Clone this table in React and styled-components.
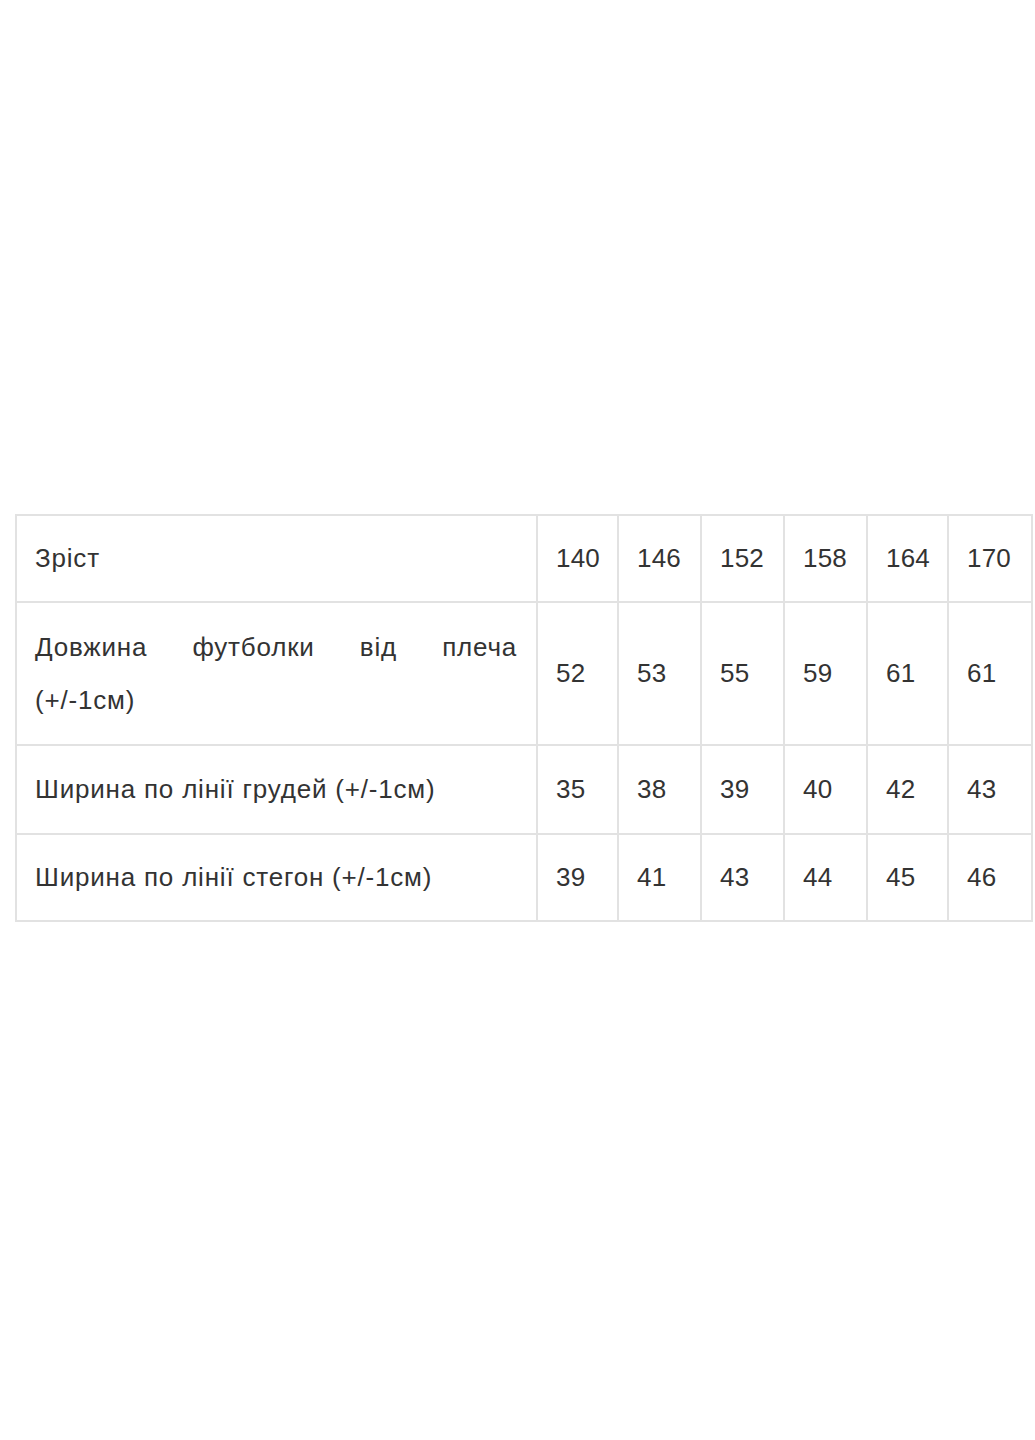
import React from "react";
import styled, { createGlobalStyle } from "styled-components";

const Global = createGlobalStyle`
  html, body { margin: 0; padding: 0; background: #fff; }
`;

const Page = styled.div`
  width: 1035px;
  height: 1440px;
  box-sizing: border-box;
  padding: 514px 0 0 15px;
  font-family: "Liberation Sans", Arial, sans-serif;
  color: #333;
`;

const Table = styled.table`
  border-collapse: collapse;
  table-layout: fixed;
  width: 1017px;
  font-size: 26px;
  line-height: 53px;
`;

const Col = styled.col`
  width: ${(p) => p.$w}px;
`;

const Row = styled.tr`
  height: ${(p) => p.$h}px;
`;

const Cell = styled.td`
  border: 2px solid #e2e2e2;
  padding: 16px ${(p) => (p.$label ? 19 : 0)}px 16px 18px;
  vertical-align: middle;
  text-align: left;
  letter-spacing: ${(p) => (p.$label ? "0.8px" : "0.2px")};
`;

const Line = styled.div`
  text-align: ${(p) => (p.$justify ? "justify" : "left")};
  text-align-last: ${(p) => (p.$justify ? "justify" : "left")};
`;

const cols = [521, 81, 83, 83, 83, 81, 84];

const rows = [
  { lines: ["Зріст"], values: ["140", "146", "152", "158", "164", "170"], h: 87 },
  { lines: ["Довжина футболки від плеча", "(+/-1см)"], values: ["52", "53", "55", "59", "61", "61"], h: 143 },
  { lines: ["Ширина по лінії грудей (+/-1см)"], values: ["35", "38", "39", "40", "42", "43"], h: 89 },
  { lines: ["Ширина по лінії стегон (+/-1см)"], values: ["39", "41", "43", "44", "45", "46"], h: 87 },
];

export default function App() {
  return (
    <Page>
      <Global />
      <Table>
        <colgroup>
          {cols.map((w, i) => (
            <Col key={i} $w={w} />
          ))}
        </colgroup>
        <tbody>
          {rows.map((r) => (
            <Row key={r.lines[0]} $h={r.h}>
              <Cell $label>
                {r.lines.map((l, i) => (
                  <Line key={i} $justify={r.lines.length > 1 && i < r.lines.length - 1}>
                    {l}
                  </Line>
                ))}
              </Cell>
              {r.values.map((v, i) => (
                <Cell key={i}>{v}</Cell>
              ))}
            </Row>
          ))}
        </tbody>
      </Table>
    </Page>
  );
}
